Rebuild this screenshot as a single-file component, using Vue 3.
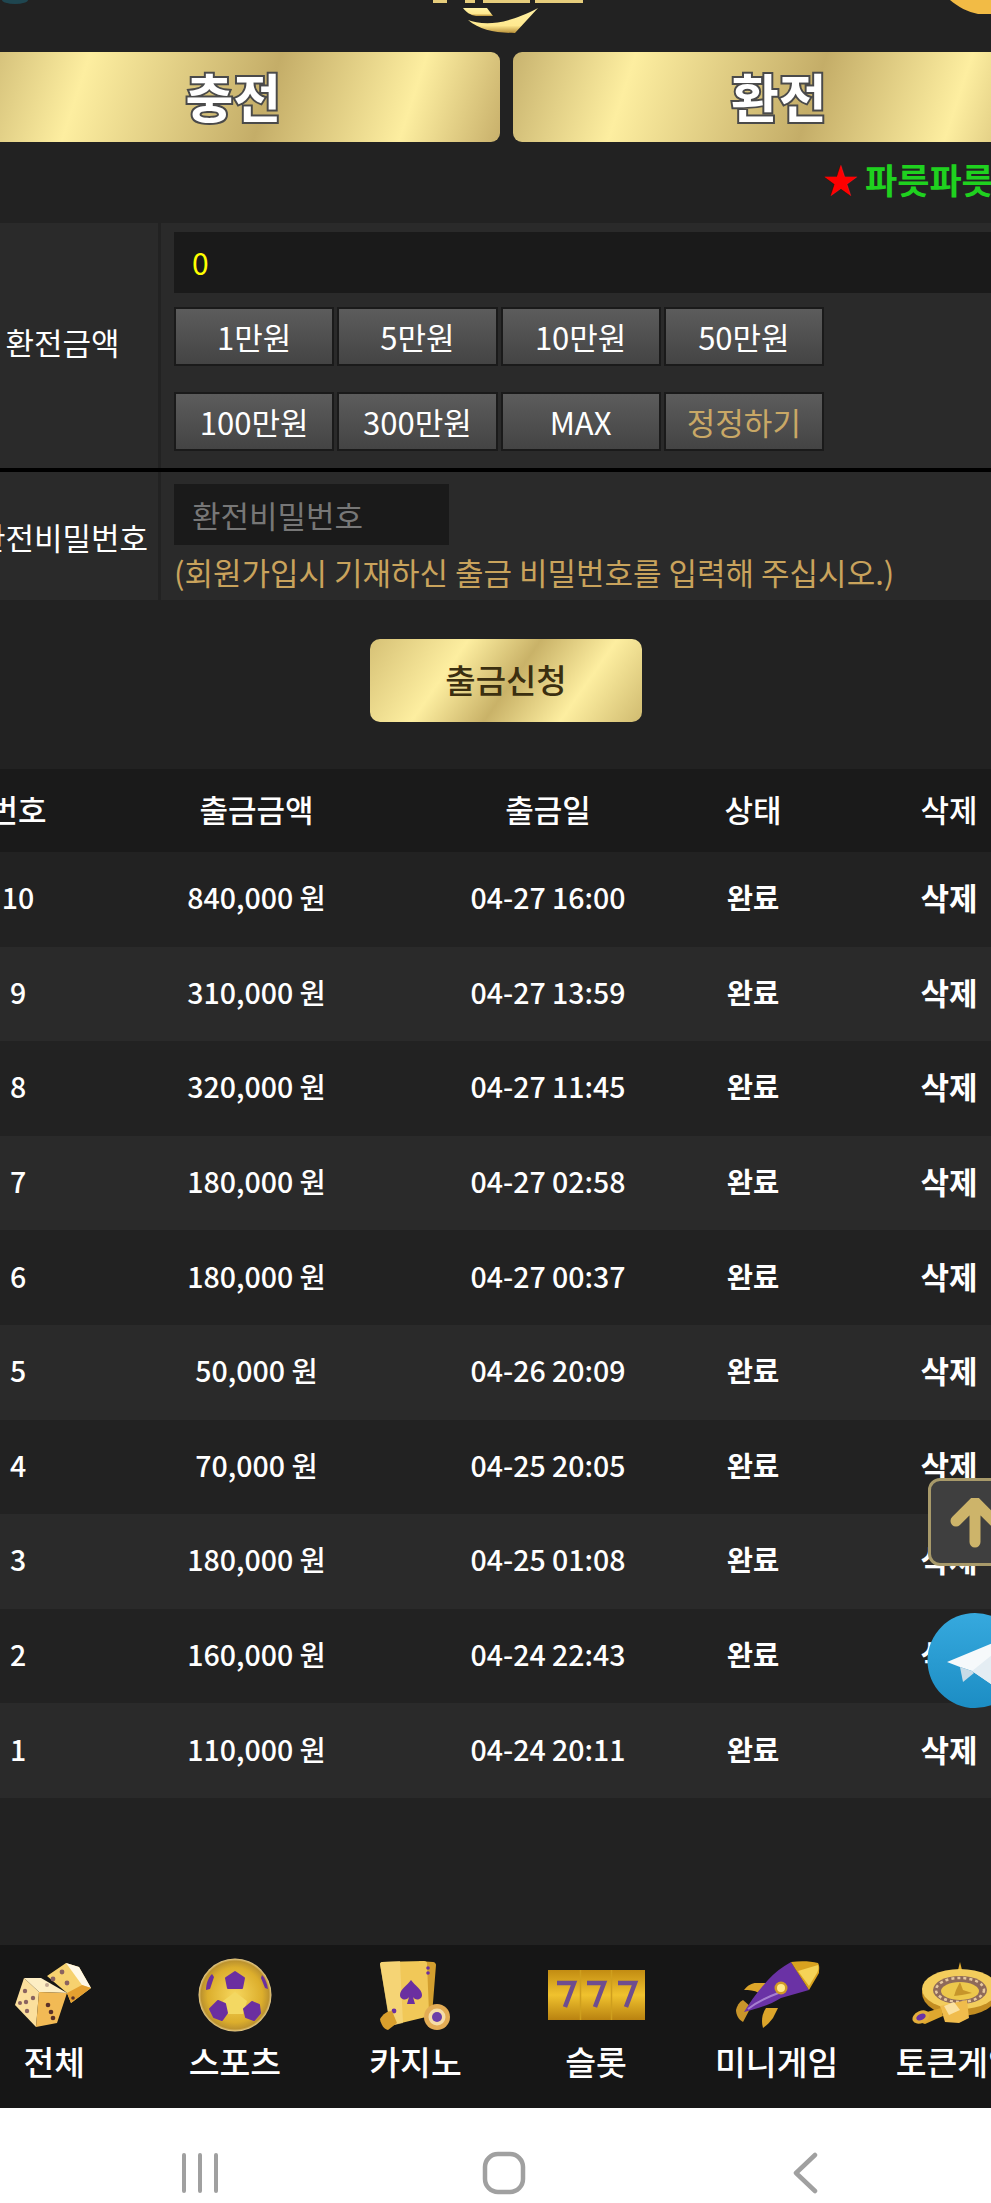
<template>
  <div class="screen">
    <div class="page">
      <div class="topbar">
        <svg class="orb" width="30" height="5" viewBox="0 0 30 5">
          <ellipse cx="15" cy="0" rx="13" ry="4" fill="#1f4650" />
        </svg>
        <svg class="logo" width="160" height="36" viewBox="0 0 160 36">
          <defs>
            <linearGradient id="logoGold" x1="0" y1="0" x2="0" y2="1">
              <stop offset="0" stop-color="#fff2a6" />
              <stop offset="0.7" stop-color="#ffe98f" />
              <stop offset="1" stop-color="#b9913a" />
            </linearGradient>
          </defs>
          <path d="M3 0h14v3H3zM35 0h10v3H35zM53 0h47v3H53zM105 0h48v3h-48z" fill="#e6cd7c" />
          <path d="M33 8h24l6 8H46c-6-1-10-4-13-8z" fill="url(#logoGold)" />
          <path d="M38 20c12 4 32 8 70-12L85 33C65 33 50 30 38 20z" fill="url(#logoGold)" />
        </svg>
        <svg class="gem" width="41" height="15" viewBox="0 0 41 15">
          <path d="M0 0h41v14H28C18 12 8 7 0 0z" fill="#f2bb45" />
        </svg>
      </div>

      <div class="tabs">
        <div class="tab">충전</div>
        <div class="tab">환전</div>
      </div>

      <div class="notice">
        <span class="star">★</span><span class="scroll">파릇파릇</span>
      </div>

      <div class="form">
        <div class="form-row">
          <div class="form-label first">환전금액</div>
          <div class="form-body">
            <div class="amount">0</div>
            <div class="quick">
              <button v-for="b in quickOne" :key="b">{{ b }}</button>
            </div>
            <div class="quick second">
              <button v-for="b in quickTwo" :key="b">{{ b }}</button>
              <button class="fix">정정하기</button>
            </div>
          </div>
        </div>
        <div class="form-row pass">
          <div class="form-label">환전비밀번호</div>
          <div class="form-body">
            <div class="password">환전비밀번호</div>
            <div class="hint">(회원가입시 기재하신 출금 비밀번호를 입력해 주십시오.)</div>
          </div>
        </div>
      </div>

      <div class="submit-wrap">
        <button class="submit">출금신청</button>
      </div>

      <div class="list">
        <div class="list-row head">
          <div>번호</div><div>출금금액</div><div>출금일</div><div>상태</div><div>삭제</div>
        </div>
        <div v-for="r in rows" :key="r.no" class="list-row">
          <div>{{ r.no }}</div>
          <div>{{ r.amount }} 원</div>
          <div>{{ r.date }}</div>
          <div class="strong">완료</div>
          <div class="strong del">삭제</div>
        </div>
      </div>

      <div class="nav">
        <div v-for="n in navItems" :key="n.label" class="nav-item">
          <div class="nav-icon">
            <svg v-if="n.icon === 'dice'" width="80" height="70" viewBox="0 0 80 70">
              <path d="M33 16 52 3l13 4 12 21-20 15-4-10z" fill="#f6d16f" />
              <path d="M52 3l13 4 12 21-9-3z" fill="#fff8e6" />
              <path d="M53 33l15-8 9 3-20 15z" fill="#e5a030" />
              <path d="M10 18h17l26 15-28-1z" fill="#fdeec4" />
              <path d="M10 18l15 14-3 35L1 45z" fill="#fbdf9c" />
              <path d="M25 32l28 1-10 30-21 4z" fill="#f2ba55" />
              <g fill="#8a6360">
                <circle cx="11" cy="31" r="2.2" /><circle cx="6" cy="43" r="2" /><circle cx="12" cy="42" r="2.2" /><circle cx="19" cy="38" r="2.2" /><circle cx="13" cy="51" r="2.2" />
                <circle cx="33" cy="25" r="2" opacity="0.5" /><circle cx="48" cy="12" r="2.4" /><circle cx="39" cy="19" r="2.4" /><circle cx="53" cy="23" r="2.4" />
              </g>
              <g fill="#5a3028">
                <circle cx="34" cy="45" r="2.3" /><circle cx="37" cy="52" r="2.3" /><circle cx="39" cy="58" r="2.3" /><circle cx="59" cy="38" r="1.8" />
              </g>
            </svg>
            <svg v-else-if="n.icon === 'ball'" width="74" height="74" viewBox="0 0 74 74">
              <defs>
                <radialGradient id="ballGold" cx="0.5" cy="0.5" r="0.5">
                  <stop offset="0" stop-color="#f6d75e" />
                  <stop offset="0.75" stop-color="#dcae2c" />
                  <stop offset="0.93" stop-color="#bd932e" />
                  <stop offset="1" stop-color="#e9cf8f" />
                </radialGradient>
              </defs>
              <circle cx="37" cy="37" r="36.5" fill="url(#ballGold)" />
              <path d="M37 34l12 9-4 13H29l-4-13z" fill="#f3d862" />
              <g fill="#6b2fa0" stroke="#6b2fa0" stroke-width="2" stroke-linejoin="round">
                <path d="M37 14l9 6-2 10H30l-2-10z" />
                <path d="M20 43l7 3 2 9-5 7-8-3-4-8z" />
                <path d="M54 44l7 3 1 8-6 7-8-3-2-8z" />
              </g>
              <g fill="#6b2fa0">
                <path d="M14 16l2 3-4 12-4 1c0-6 2-12 6-16z" />
                <path d="M64 17c3 3 5 8 6 14l-3-1-4-10z" />
              </g>
            </svg>
            <svg v-else-if="n.icon === 'cards'" width="72" height="72" viewBox="0 0 72 72">
              <path d="M40 2l14 1c2 0 3 2 3 3l-4 50H40z" fill="#d39f2f" />
              <path d="M1 5c0-1 1-2 2-2l42-1c2 0 3 1 3 2l2 50c0 2-1 3-3 4l-33 8c-2 0-3-1-3-2z" fill="#f1c858" />
              <path d="M1 5c0-1 1-2 2-2l18-1 3 62-13 3z" fill="#f7d982" opacity="0.7" />
              <path d="M32 21c4 6 11 9 11 15 0 5-7 6-9 2l2 7h-8l2-7c-2 4-9 3-9-2 0-6 7-9 11-15z" fill="#6b2fa0" />
              <circle cx="15" cy="52" r="2.4" fill="#6b2fa0" />
              <circle cx="49" cy="9" r="1.8" fill="#6b2fa0" />
              <circle cx="49" cy="14" r="1.8" fill="#6b2fa0" />
              <path d="M1 60c3-5 7-8 12-8l5 12-9 7c-4-1-7-5-8-11z" fill="#d99f2d" />
              <circle cx="58" cy="58" r="13" fill="#e3ac55" />
              <circle cx="58" cy="58" r="8.5" fill="#f6dda6" />
              <circle cx="58" cy="58" r="5" fill="#6b3ea8" />
            </svg>
            <svg v-else-if="n.icon === 'slot'" width="97" height="50" viewBox="0 0 97 50">
              <defs>
                <linearGradient id="slotGold" x1="0" y1="0" x2="0" y2="1">
                  <stop offset="0" stop-color="#c28c12" />
                  <stop offset="0.5" stop-color="#f0c22e" />
                  <stop offset="1" stop-color="#b98210" />
                </linearGradient>
              </defs>
              <rect width="97" height="50" fill="url(#slotGold)" />
              <path d="M32.5 0v50M63.5 0v50" stroke="#cf9f1e" stroke-width="1.5" />
              <g fill="none" stroke="#6e4d8f" stroke-width="4.5">
                <path d="M9 13h17L17 37" />
                <path d="M39 13h17L47 37" />
                <path d="M70 13h17L78 37" />
              </g>
            </svg>
            <svg v-else-if="n.icon === 'rocket'" width="86" height="72" viewBox="0 0 86 72">
              <path d="M10 31c4-5 8-7 12-7h13l-10 10c-5-3-10-3-15-3z" fill="#dca52a" />
              <path d="M29 69c-2-7-1-14 3-20h12l-5 10c-3 4-6 7-10 10z" fill="#dca52a" />
              <path d="M2 51c1-4 3-8 7-10l8 7-8 15c-4-2-7-7-7-12z" fill="#c9952a" />
              <path d="M57 3C48 8 40 14 34 21 24 32 16 43 10 53c12-3 26-7 37-14l28-8z" fill="#6a32a5" />
              <path d="M14 50c10-8 22-13 33-17" fill="none" stroke="#a67fd0" stroke-width="2" />
              <path d="M57 3c9-1 19-1 27 1 2 3 1 7 1 10L75 31 62 11z" fill="#d9a21f" />
              <path d="M64 12 84 6c1 3 0 6-1 8L75 27z" fill="#f5d357" />
              <circle cx="47" cy="29" r="6.5" fill="#d19a24" />
              <circle cx="47" cy="29" r="4" fill="#ffe98a" />
            </svg>
            <svg v-else width="92" height="66" viewBox="0 0 92 66">
              <path d="M49 0l2 8h-4z" fill="#e3ad2d" />
              <ellipse cx="49" cy="31" rx="38" ry="23" fill="#c38d22" />
              <ellipse cx="49" cy="27" rx="38" ry="20" fill="#f3cd5c" />
              <ellipse cx="49" cy="28" rx="27" ry="14" fill="#8e6a5a" />
              <ellipse cx="49" cy="28" rx="24" ry="12" fill="none" stroke="#e7c9a0" stroke-width="2.5" stroke-dasharray="3 3" />
              <ellipse cx="49" cy="29" rx="19" ry="9" fill="#edc84c" />
              <path d="M49 20l3 8 9 3-10 2-8 1 2-6z" fill="#c6952a" />
              <path d="M29 44l27-6 2 18-10 5-14-1z" fill="#f0bc4c" />
              <path d="M33 44l10-4 6 8-11 5z" fill="#fbe1a0" />
              <path d="M30 46 16 50 8 60l6 2 18-8z" fill="#dfa72f" />
              <ellipse cx="10" cy="55" rx="9" ry="6" fill="#e2ad3a" transform="rotate(-25 10 55)" />
              <ellipse cx="10" cy="55" rx="5" ry="3" fill="#6a32a5" transform="rotate(-25 10 55)" />
            </svg>
          </div>
          <div class="nav-label">{{ n.label }}</div>
        </div>
      </div>
    </div>

    <div class="softkeys">
      <svg width="40" height="40" viewBox="0 0 40 40"><path d="M3 2v36M19 2v36M35 2v36" stroke="#a0a0a0" stroke-width="4" stroke-linecap="round" /></svg>
      <svg width="44" height="44" viewBox="0 0 44 44"><rect x="3" y="3" width="38" height="38" rx="13" fill="none" stroke="#a0a0a0" stroke-width="4.5" /></svg>
      <svg width="26" height="42" viewBox="0 0 26 42"><path d="M23 3 4 21l19 18" fill="none" stroke="#a0a0a0" stroke-width="4.5" stroke-linecap="round" stroke-linejoin="round" /></svg>
    </div>

    <div class="float-top">
      <svg width="50" height="50" viewBox="0 0 50 50"><path d="M25 4 6 23M25 4l19 19M25 6v38" fill="none" stroke="#cdb46a" stroke-width="11" stroke-linecap="round" /></svg>
    </div>
    <div class="float-tg">
      <svg width="95" height="95" viewBox="0 0 95 95">
        <defs>
          <linearGradient id="tgBlue" x1="0" y1="0" x2="0" y2="1">
            <stop offset="0" stop-color="#36a9de" />
            <stop offset="1" stop-color="#1c8dc4" />
          </linearGradient>
        </defs>
        <circle cx="48" cy="47.5" r="47.5" fill="url(#tgBlue)" />
        <path d="M20 49 95 18v44l-31 9-19-13-12-4z" fill="#f6f9fb" />
        <path d="M33 54l3 15 11-9-2-2z" fill="#c8dbe7" />
        <path d="M45 58 95 18 64 71z" fill="#e4edf3" />
      </svg>
    </div>
  </div>
</template>

<script setup>
const quickOne = ['1만원', '5만원', '10만원', '50만원']
const quickTwo = ['100만원', '300만원', 'MAX']

const rows = [
  { no: 10, amount: '840,000', date: '04-27 16:00' },
  { no: 9, amount: '310,000', date: '04-27 13:59' },
  { no: 8, amount: '320,000', date: '04-27 11:45' },
  { no: 7, amount: '180,000', date: '04-27 02:58' },
  { no: 6, amount: '180,000', date: '04-27 00:37' },
  { no: 5, amount: '50,000', date: '04-26 20:09' },
  { no: 4, amount: '70,000', date: '04-25 20:05' },
  { no: 3, amount: '180,000', date: '04-25 01:08' },
  { no: 2, amount: '160,000', date: '04-24 22:43' },
  { no: 1, amount: '110,000', date: '04-24 20:11' }
]

const navItems = [
  { label: '전체', icon: 'dice' },
  { label: '스포츠', icon: 'ball' },
  { label: '카지노', icon: 'cards' },
  { label: '슬롯', icon: 'slot' },
  { label: '미니게임', icon: 'rocket' },
  { label: '토큰게임', icon: 'roulette' }
]
</script>

<style>
html, body { margin: 0; background: #222; }
</style>

<style scoped>
.screen { position: relative; width: 991px; height: 2203px; overflow: hidden; background: #222; font-family: "Noto Sans CJK KR", "Noto Sans", sans-serif; color: #fff; }
.page { width: 1078px; margin-left: -33px; }
.topbar { height: 52px; position: relative; }
.orb { position: absolute; left: 33px; top: 0; }
.logo { position: absolute; left: 463px; top: 0; }
.gem { position: absolute; right: 54px; top: 0; }

.tabs { display: flex; gap: 13px; height: 90px; }
.tab { flex: 1; display: flex; align-items: center; justify-content: center; padding-bottom: 4px; border-radius: 9px; background: linear-gradient(108deg, #c8b36f 0%, #fdeea0 22%, #c4ad68 56%, #fdeea0 82%, #c8b06b 100%); font-size: 52px; font-weight: 700; color: #fff; -webkit-text-stroke: 4px #4a4a4a; paint-order: stroke fill; }

.notice { height: 81px; box-sizing: border-box; display: flex; align-items: center; padding: 0 0 9px 856px; font-size: 35px; font-weight: 700; white-space: nowrap; overflow: hidden; }
.star { color: #f00; margin-right: 7px; }
.scroll { color: #1fd11f; }

.form { background: #2a2a2a; }
.form-row { display: grid; grid-template-columns: 194px 1fr; height: 245px; }
.form-row.pass { height: 128px; border-top: 4px solid #000; }
.form-label { display: flex; align-items: center; justify-content: center; font-size: 31px; border-right: 3px solid #222; box-sizing: border-box; white-space: nowrap; }
.form-label.first { padding-bottom: 8px; }
.form-body { padding: 9px 0 0 13px; }
.amount { height: 61px; background: #1a1a1a; color: #ff0; font-size: 30px; line-height: 61px; padding-left: 18px; }
.quick { display: flex; margin-top: 14px; width: 650px; gap: 3px; }
.quick.second { margin-top: 26px; }
.quick button { flex: 1; height: 59px; padding: 0; border: 2px solid #1a1a1a; background: linear-gradient(#5c5c5c, #444); color: #fff; font-family: inherit; font-size: 31px; }
.quick button.fix { color: #c9a866; }
.password { width: 275px; height: 61px; margin-top: 3px; background: #1a1a1a; color: #777; font-size: 31px; line-height: 61px; padding-left: 18px; box-sizing: border-box; }
.hint { color: #c9a35c; font-size: 31px; line-height: 40px; margin-top: 7px; white-space: nowrap; }

.submit-wrap { display: flex; justify-content: center; padding: 39px 0 47px; }
.submit { width: 272px; height: 83px; padding: 0 0 3px; border: 0; border-radius: 10px; background: linear-gradient(125deg, #d6c176 0%, #fdeea0 30%, #c9b268 52%, #fdeea0 75%, #d0bb70 100%); color: #3b2f10; font-family: inherit; font-size: 33px; font-weight: 500; }

.list-row { display: grid; grid-template-columns: 102px 375px 208px 202px 190px; height: 94.6px; box-sizing: border-box; padding-bottom: 5px; align-items: center; text-align: center; background: #222; font-size: 28.5px; font-weight: 500; }
.list-row > div { white-space: nowrap; }
.list-row:nth-child(odd) { background: #2a2a2a; }
.list-row.head { height: 83px; background: #1a1a1a; font-size: 31px; }
.strong { font-weight: 700; }
.del { font-size: 31px; }

.nav { margin: 147px 0 0 -3px; height: 163px; background: #161616; display: grid; grid-template-columns: repeat(6, 180.6px); }
.nav-item { display: flex; flex-direction: column; align-items: center; }
.nav-icon { height: 82px; display: flex; align-items: center; justify-content: center; margin-top: 9px; }
.nav-label { font-size: 33.5px; font-weight: 500; line-height: 50px; white-space: nowrap; }

.softkeys { height: 95px; box-sizing: border-box; padding-top: 35px; background: #fff; display: flex; align-items: center; }
.softkeys svg:nth-child(1) { margin-left: 181px; }
.softkeys svg:nth-child(2) { margin-left: 261px; }
.softkeys svg:nth-child(3) { margin-left: 266px; }

.float-top { position: absolute; left: 928px; top: 1478px; width: 90px; height: 88px; box-sizing: border-box; border: 3px solid #a89a6a; border-radius: 12px; background: #3f3f3f; padding: 17px 0 0 19px; }
.float-tg { position: absolute; left: 927px; top: 1613px; }
</style>
